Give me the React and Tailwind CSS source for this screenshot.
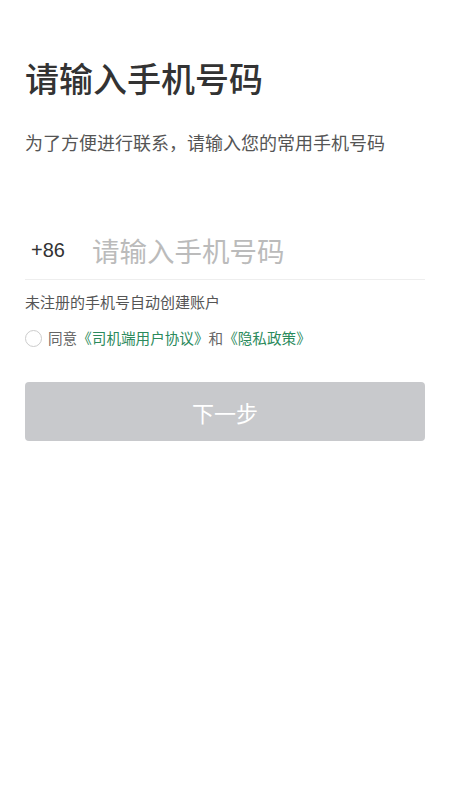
import React, { useState } from 'react';

const App = () => {
  const [phone, setPhone] = useState('');
  const [agreed, setAgreed] = useState(false);

  return (
    <div
      className="min-h-[800px] w-full bg-white px-[25px] pt-[58px]"
      style={{ fontFamily: '"Noto Sans CJK SC", "Noto Sans", sans-serif' }}
    >
      <h1 className="text-[34px] leading-[40px] font-medium text-[#333333]">请输入手机号码</h1>
      <p className="mt-[32px] text-[18px] leading-[24px] text-[#555555]">
        为了方便进行联系，请输入您的常用手机号码
      </p>

      <div className="mt-[77px] flex items-center border-b border-[#eeeeee] pb-[10px]">
        <span className="ml-[6px] w-[61px] text-[20px] text-[#333333]" style={{ fontFamily: '"Liberation Sans", Arial, sans-serif' }}>+86</span>
        <input
          type="tel"
          value={phone}
          onChange={(e) => setPhone(e.target.value)}
          placeholder="请输入手机号码"
          className="flex-1 bg-transparent text-[27.5px] leading-[38px] text-[#333333] placeholder:text-[#bbbbbb] focus:outline-none"
        />
      </div>

      <p className="mt-[12px] text-[15px] leading-[20px] text-[#555555]">未注册的手机号自动创建账户</p>

      <div className="mt-[16px] flex items-center text-[14.6px] leading-[20px]">
        <button
          onClick={() => setAgreed(!agreed)}
          className="mr-[6px] h-[17px] w-[17px] rounded-full border border-[#cccccc]"
        />
        <span className="text-[#666666]">同意</span>
        <span className="text-[#2b8a5c]">《司机端用户协议》</span>
        <span className="text-[#666666]">和</span>
        <span className="text-[#2b8a5c]">《隐私政策》</span>
      </div>

      <button className="mt-[34px] h-[59px] w-full rounded-[4px] bg-[#c8c9cc] text-[22px] leading-[56px] text-white">
        下一步
      </button>
    </div>
  );
};

export default App;
